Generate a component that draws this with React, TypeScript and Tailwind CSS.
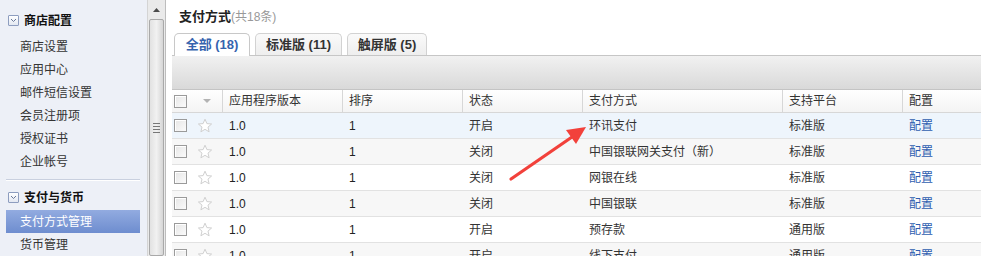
import React from "react";

const font = { fontFamily: '"Liberation Sans", "Noto Sans CJK SC", sans-serif' };

const rows = [
  { v: "1.0", s: "1", st: "开启", p: "环讯支付", pl: "标准版" },
  { v: "1.0", s: "1", st: "关闭", p: "中国银联网关支付（新）", pl: "标准版" },
  { v: "1.0", s: "1", st: "关闭", p: "网银在线", pl: "标准版" },
  { v: "1.0", s: "1", st: "关闭", p: "中国银联", pl: "标准版" },
  { v: "1.0", s: "1", st: "开启", p: "预存款", pl: "通用版" },
  { v: "1.0", s: "1", st: "开启", p: "线下支付", pl: "通用版" },
];

function Box() {
  return (
    <span className="inline-block w-[13px] h-[13px] border border-[#9a9a9a] bg-gradient-to-br from-[#e6e6e6] to-[#fbfbfb] shadow-[inset_1px_1px_0_#fff]" />
  );
}

function Star() {
  return (
    <svg width="16" height="16" viewBox="0 0 16 16">
      <path
        d="M8 1.2 L9.9 5.6 L14.6 6 L11 9.1 L12.1 13.8 L8 11.3 L3.9 13.8 L5 9.1 L1.4 6 L6.1 5.6 Z"
        fill="#fff"
        stroke="#d0d0d0"
        strokeWidth="1"
        strokeLinejoin="round"
      />
    </svg>
  );
}

function FoldIcon() {
  return (
    <span className="inline-flex items-center justify-center w-[11px] h-[11px] border border-[#8d9dbf] bg-gradient-to-b from-white to-[#e3e8f2] rounded-[1px]">
      <svg width="7" height="5" viewBox="0 0 7 5">
        <path d="M1 1 L3.5 3.5 L6 1" fill="none" stroke="#6b7a99" strokeWidth="1" />
      </svg>
    </span>
  );
}

export default function App() {
  const items1 = ["商店设置", "应用中心", "邮件短信设置", "会员注册项", "授权证书", "企业帐号"];
  return (
    <div className="relative w-[981px] h-[256px] flex overflow-hidden bg-white text-[12px] text-[#333]" style={font}>
      {/* sidebar */}
      <div className="w-[147px] shrink-0 bg-[#edf0f7] flex flex-col">
        <div className="h-[35px] shrink-0 flex items-center pl-[8px] pt-[7px] pb-[1px] gap-[5px] font-bold text-[#111]">
          <FoldIcon />
          <span>商店配置</span>
        </div>
        {items1.map((t) => (
          <div key={t} className="h-[23px] shrink-0 flex items-center pl-[20px]">
            {t}
          </div>
        ))}
        <div className="mx-[6px] mt-[6px] shrink-0 border-t border-[#c9d0df] border-b border-b-white w-[134px]" />
        <div className="h-[29px] shrink-0 flex items-center pl-[8px] pt-[4px] gap-[5px] font-bold text-[#111]">
          <FoldIcon />
          <span>支付与货币</span>
        </div>
        <div className="mx-[6px] shrink-0 w-[134px] h-[23px] flex items-center pl-[14px] text-white bg-gradient-to-b from-[#92abe0] to-[#6e8dcf]">
          支付方式管理
        </div>
        <div className="h-[23px] shrink-0 flex items-center pl-[20px]">货币管理</div>
      </div>

      {/* scrollbar */}
      <div className="w-[19px] shrink-0 bg-[#eaeaea] border-l border-[#d4d4d4] border-r border-r-[#bdbdbd] flex flex-col items-center">
        <div className="h-[19px] shrink-0 flex items-center justify-center">
          <svg width="7" height="4" viewBox="0 0 7 4">
            <path d="M0 4 L3.5 0 L7 4 Z" fill="#4a4a4a" />
          </svg>
        </div>
        <div className="flex-1 w-[15px] border border-[#a9a9a9] rounded-[2px] bg-gradient-to-r from-[#e2e2e2] via-[#f1f1f1] to-[#d6d6d6] flex items-center justify-center">
          <div className="flex flex-col gap-[2px] mb-[20px]">
            <div className="w-[7px] h-px bg-[#777]" />
            <div className="w-[7px] h-px bg-[#777]" />
            <div className="w-[7px] h-px bg-[#777]" />
            <div className="w-[7px] h-px bg-[#777]" />
          </div>
        </div>
      </div>

      {/* main */}
      <div className="flex-1 flex flex-col pl-[6px] min-w-0">
        <div className="h-[32px] shrink-0 flex items-center pl-[7px] pt-[1px]">
          <span className="font-bold text-[13px] text-[#222]">支付方式</span>
          <span className="text-[#999] text-[12px]">(共18条)</span>
        </div>
        <div className="h-[23px] shrink-0 flex items-end gap-[5px] pl-[2px] relative">
          <div className="h-[23px] w-[76px] flex items-center justify-center rounded-t-[5px] border border-[#c8c8c8] border-b-0 bg-white font-bold text-[#3563ae] text-[13px] relative z-10 -mb-px pb-px">
            全部 (18)
          </div>
          <div className="h-[22px] w-[87px] flex items-center justify-center rounded-t-[5px] border border-[#d2d2d2] border-b-0 bg-gradient-to-b from-[#fafafa] to-[#eeeeee] font-bold text-[#333] text-[13px]">
            标准版 (11)
          </div>
          <div className="h-[22px] w-[80px] flex items-center justify-center rounded-t-[5px] border border-[#d2d2d2] border-b-0 bg-gradient-to-b from-[#fafafa] to-[#eeeeee] font-bold text-[#333] text-[13px]">
            触屏版 (5)
          </div>
        </div>
        <div className="h-[35px] shrink-0 border-t border-[#c6c6c6] border-b border-b-[#c4c4c4] bg-gradient-to-b from-[#f1f1f1] to-[#d9d9d9]" />
        {/* header */}
        <div className="h-[23px] shrink-0 flex items-center border-b border-[#d7d7d7] bg-gradient-to-b from-white to-[#f4f4f4]">
          <div className="w-[23px] flex items-center pl-[2px]"><Box /></div>
          <div className="w-[27px] flex items-center pl-[8px]">
            <svg width="8" height="4" viewBox="0 0 8 4"><path d="M0 0 L8 0 L4 4 Z" fill="#b3b3b3" /></svg>
          </div>
          <div className="w-[120px] h-full flex items-center pl-[6px] border-l border-[#d7d7d7]">应用程序版本</div>
          <div className="w-[120px] h-full flex items-center pl-[6px] border-l border-[#d7d7d7]">排序</div>
          <div className="w-[120px] h-full flex items-center pl-[6px] border-l border-[#d7d7d7]">状态</div>
          <div className="w-[200px] h-full flex items-center pl-[6px] border-l border-[#d7d7d7]">支付方式</div>
          <div className="w-[120px] h-full flex items-center pl-[6px] border-l border-[#d7d7d7]">支持平台</div>
          <div className="flex-1 h-full flex items-center pl-[6px] border-l border-[#d7d7d7]">配置</div>
        </div>
        {rows.map((r, i) => (
          <div
            key={i}
            className={
              "h-[26px] shrink-0 flex items-center border-b border-[#e2e2e2] " +
              (i === 0 ? "bg-[#eef5fc]" : i % 2 === 1 ? "bg-[#f7f7f7]" : "bg-white")
            }
          >
            <div className="w-[23px] flex items-center pl-[2px]"><Box /></div>
            <div className="w-[27px] flex items-center pl-[2px]"><Star /></div>
            <div className="w-[120px] pl-[7px] text-[#222]">{r.v}</div>
            <div className="w-[120px] pl-[7px] text-[#222]">{r.s}</div>
            <div className="w-[120px] pl-[7px]">{r.st}</div>
            <div className="w-[200px] pl-[7px]">{r.p}</div>
            <div className="w-[120px] pl-[7px]">{r.pl}</div>
            <div className="flex-1 pl-[7px] text-[#2e5eb0]">配置</div>
          </div>
        ))}
      </div>

      {/* red annotation arrow */}
      <svg className="absolute left-0 top-0 pointer-events-none" width="981" height="256" viewBox="0 0 981 256">
        <path d="M511 179 L572 137" stroke="#f2413b" strokeWidth="3.2" strokeLinecap="round" />
        <path d="M586 127 L566 130 L576 144 Z" fill="#f2413b" />
      </svg>
    </div>
  );
}
